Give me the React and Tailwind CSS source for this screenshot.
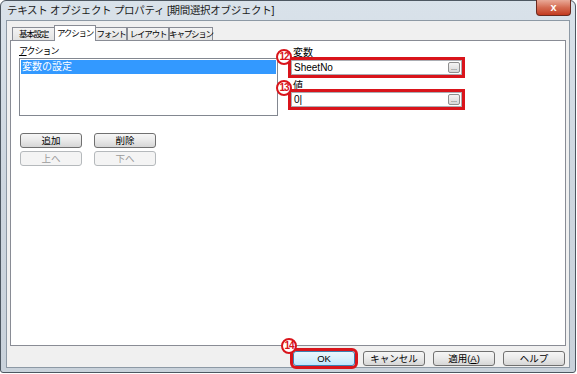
import React from "react";

const font = "font-['Liberation_Sans','Noto_Sans_CJK_JP',sans-serif]";

function Mark({ n, className }) {
  return (
    <span
      className={`absolute flex h-[16px] w-[16px] items-center justify-center rounded-full border-2 border-[#d9141b] bg-white text-[10px] font-bold leading-none tracking-[-1px] text-[#d9141b] ${className}`}
    >
      {n}
    </span>
  );
}

function Btn({ children, disabled, primary, className = "" }) {
  let look = "border-[#707070] bg-gradient-to-b from-[#f6f6f6] via-[#e9e9e9] to-[#d6d6d6] text-black";
  if (disabled) look = "border-[#b5b9bc] bg-[#f4f4f4] text-[#9a9a9a]";
  if (primary) look = "border-[#3c7fb1] bg-gradient-to-b from-[#eaf6fd] via-[#d9f0fc] to-[#bee6fd] text-black";
  return (
    <div
      className={`flex h-[15px] w-[62px] items-center justify-center whitespace-nowrap rounded-[3px] border text-[9.5px] leading-none ${look} ${className}`}
    >
      {children}
    </div>
  );
}

function Field({ value }) {
  return (
    <div className="flex h-[15px] w-[171px] items-center justify-between border border-[#abadb3] bg-white pl-[2px] pr-[1px] outline-[3px] outline-[#d9141b] outline-solid">
      <span className="text-[10px] leading-none">{value}</span>
      <span className="flex h-[11px] w-[12px] items-end justify-center rounded-[2px] border border-[#8f8f8f] bg-gradient-to-b from-[#f4f4f4] to-[#d8d8d8] pb-[1px] text-[7px] leading-none text-[#333]">
        ...
      </span>
    </div>
  );
}

const tabs = [
  ["基本設定", "w-[42px]"],
  ["アクション", "w-[42px]"],
  ["フォント", "w-[31px]"],
  ["レイアウト", "w-[42px]"],
  ["キャプション", "w-[44px]"],
];

export default function App() {
  return (
    <div className={`h-[374px] w-[577px] bg-white ${font}`}>
      <div className="flex h-[373px] w-[576px] flex-col rounded-t-[6px] rounded-b-[3px] border border-[#4d5761] bg-gradient-to-b from-[#d9e2ea] via-[#cdd6df] to-[#c9d2db] px-[5px] pb-[4px]">
        {/* title bar */}
        <div className="relative flex h-[19px] shrink-0 items-center">
          <span className="pl-[1px] text-[10.5px] leading-none tracking-[-0.3px] text-[#1b1b1b]">
            テキスト オブジェクト プロパティ [期間選択オブジェクト]
          </span>
          <div className="absolute right-[-1px] top-[-1px] flex h-[16px] w-[35px] items-center justify-center rounded-b-[4px] border border-t-0 border-[#6a2a1f] bg-gradient-to-b from-[#e9a998] via-[#d46b52] to-[#c2391e]">
            <span className="text-[11px] font-bold leading-none text-white">x</span>
          </div>
        </div>

        {/* client */}
        <div className="flex flex-1 flex-col border border-[#8d99a5] bg-[#f0f0f0] px-[3px] pt-[4px]">
          <div className="flex items-end pl-[2px]">
            {tabs.map(([t, w], i) =>
              i === 1 ? (
                <div
                  key={t}
                  className={`relative z-10 -mb-px flex h-[16px] shrink-0 items-center justify-center whitespace-nowrap border border-b-0 border-[#898c95] bg-white text-[8.5px] leading-none tracking-[-1.2px] ${w}`}
                >
                  {t}
                </div>
              ) : (
                <div
                  key={t}
                  className={`flex h-[13px] shrink-0 items-center justify-center whitespace-nowrap border border-b-0 border-[#898c95] bg-gradient-to-b from-[#f3f3f3] to-[#e3e3e3] text-[8.5px] leading-none tracking-[-1.2px] first:border-r-0 [&:nth-child(3)]:border-l-0 ${w}`}
                >
                  {t}
                </div>
              )
            )}
          </div>

          <div className="relative flex h-[306px] shrink-0 border border-[#898c95] bg-white pl-[8px] pt-[4px]">
            {/* left column */}
            <div className="flex w-[259px] flex-col">
              <span className="h-[13px] text-[9px] leading-[12px] tracking-[-1px]">
                <span className="underline">ア</span>クション
              </span>
              <div className="h-[58px] border border-[#828790] bg-white p-[1px]">
                <div className="flex h-[14px] items-center bg-[#3399ff] pl-[1px] text-[10px] leading-none text-white">
                  変数の設定
                </div>
              </div>
              <div className="mt-[17px] flex gap-[12px] pl-[1px]">
                <Btn>追加</Btn>
                <Btn>削除</Btn>
              </div>
              <div className="mt-[3px] flex gap-[12px] pl-[1px]">
                <Btn disabled>上へ</Btn>
                <Btn disabled>下へ</Btn>
              </div>
            </div>

            {/* right column */}
            <div className="ml-[13px] flex flex-col">
              <span className="h-[15px] pl-[2px] pt-[2px] text-[10px] leading-[12px]">変数</span>
              <Field value="SheetNo" />
              <span className="mt-[3px] h-[14px] pl-[2px] pt-[3px] text-[10px] leading-[10px]">値</span>
              <Field value="0|" />
            </div>

            <Mark n="12" className="left-[265px] top-[8px]" />
            <Mark n="13" className="left-[265px] top-[39px]" />
          </div>

          {/* bottom buttons */}
          <div className="relative flex justify-end gap-[8px] pr-[1px] pt-[5px]">
            <Btn primary className="outline-[3px] outline-[#d9141b] outline-solid">
              OK
            </Btn>
            <Btn>キャンセル</Btn>
            <Btn>
              適用(<span className="underline">A</span>)
            </Btn>
            <Btn>ヘルプ</Btn>
            <Mark n="14" className="left-[271px] top-[-8px]" />
          </div>
        </div>
      </div>
    </div>
  );
}
